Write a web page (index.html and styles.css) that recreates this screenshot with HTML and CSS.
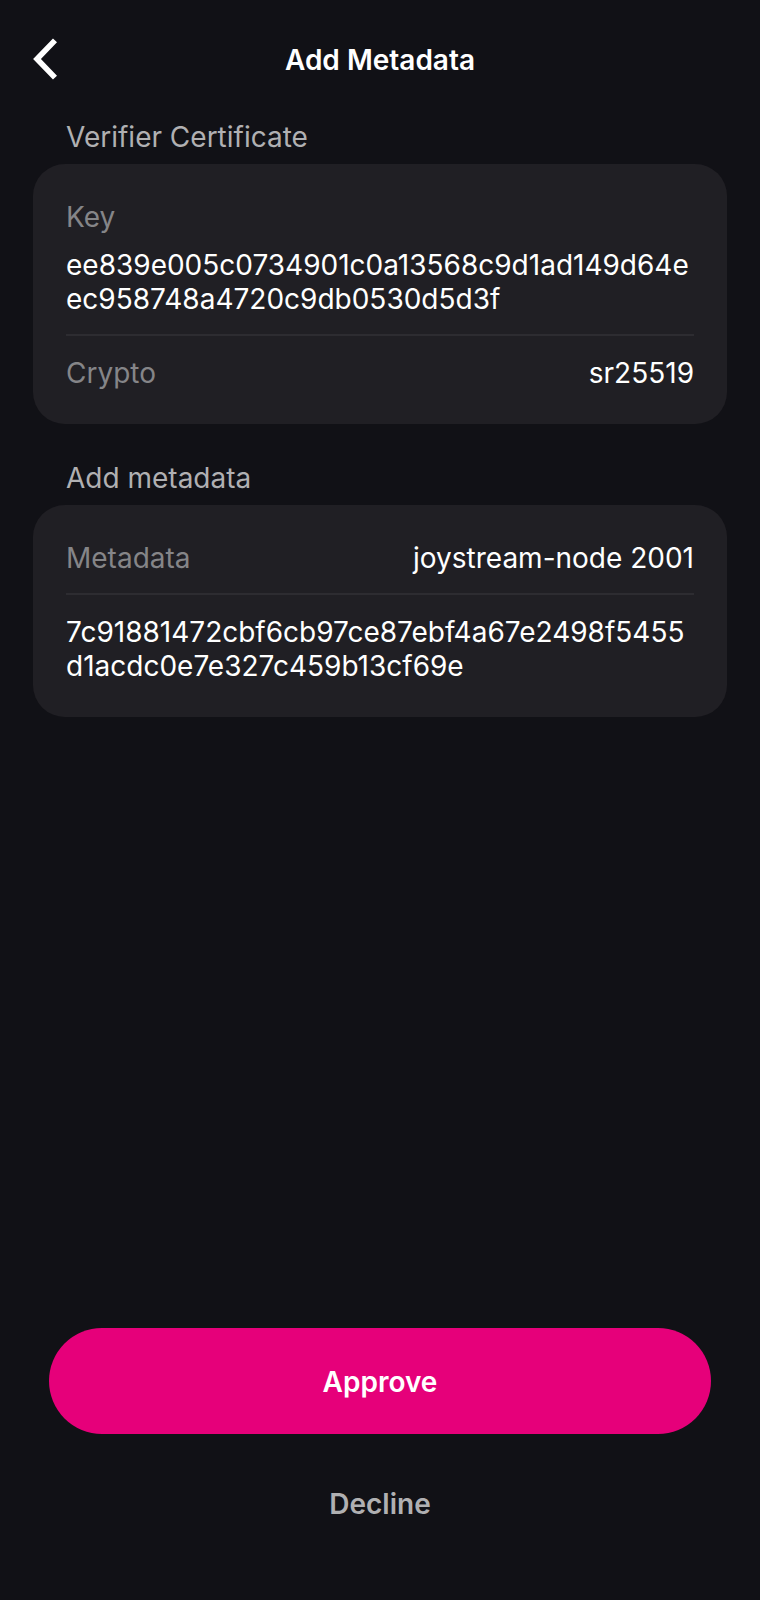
FILE: index.html
```html
<!DOCTYPE html>
<html lang="en">
<head>
<meta charset="utf-8">
<meta name="viewport" content="width=device-width, initial-scale=1">
<title>Add Metadata</title>
<link rel="stylesheet" href="styles.css">
</head>
<body>
<div class="screen">
  <header class="header">
    <button class="back" type="button" aria-label="Back">
      <svg class="back-icon" viewBox="0 0 24 42" fill="none" stroke="currentColor" stroke-width="5.6"><path d="M22 2.4 L4 21 L22 39.6"/></svg>
    </button>
    <h1 class="title">Add Metadata</h1>
  </header>
  <main class="content">
    <section class="section">
      <h2 class="section-title">Verifier Certificate</h2>
      <dl class="card">
        <div class="stack">
          <dt class="label">Key</dt>
          <dd class="value hash">ee839e005c0734901c0a13568c9d1ad149d64eec958748a4720c9db0530d5d3f</dd>
        </div>
        <div class="row divided">
          <dt class="label">Crypto</dt>
          <dd class="value">sr25519</dd>
        </div>
      </dl>
    </section>
    <section class="section">
      <h2 class="section-title">Add metadata</h2>
      <div class="card">
        <div class="row">
          <span class="label">Metadata</span>
          <span class="value">joystream-node 2001</span>
        </div>
        <p class="value hash divided">7c91881472cbf6cb97ce87ebf4a67e2498f5455d1acdc0e7e327c459b13cf69e</p>
      </div>
    </section>
  </main>
  <footer class="actions">
    <button class="button primary" type="button">Approve</button>
    <button class="button secondary" type="button">Decline</button>
  </footer>
</div>
</body>
</html>
```
FILE: styles.css
```css
* {
  box-sizing: border-box;
}

body,
h1,
h2,
p,
dl,
dd {
  margin: 0;
}

body {
  background: #111116;
  color: #fff;
  font-family: Inter, "Liberation Sans", sans-serif;
  font-size: 28px;
  line-height: 34px;
}

button {
  padding: 0;
  border: 0;
  background: none;
  color: inherit;
  font: inherit;
  cursor: pointer;
}

.screen {
  display: flex;
  flex-direction: column;
  min-height: 100vh;
  padding: 32px 33px 44px;
}

.header {
  display: grid;
  grid-template-columns: 48px 1fr 48px;
  align-items: center;
  height: 54px;
}

.back {
  display: flex;
}

.back-icon {
  width: 24px;
  height: 42px;
}

.title {
  padding-top: 2px;
  font-size: 28px;
  font-weight: 600;
  text-align: center;
}

.content {
  display: flex;
  flex-direction: column;
  flex: 1;
  gap: 35px;
  padding-top: 32px;
}

.section-title {
  padding: 2px 33px 10px;
  color: #b0b0b2;
  font-size: 28px;
  font-weight: 400;
}

.card {
  padding: 36px 33px 34px;
  border-radius: 32px;
  background: #201f24;
}

.stack {
  display: grid;
  gap: 14px;
}

.row {
  display: flex;
  justify-content: space-between;
}

.divided {
  margin-top: 18px;
  padding-top: 20px;
  border-top: 2px solid #2d2c31;
}

.label {
  color: #858588;
}

.hash {
  overflow-wrap: anywhere;
}

.actions {
  display: grid;
  gap: 16px;
  padding: 0 16px;
}

.button {
  height: 106px;
  padding-top: 2px;
  border-radius: 53px;
  font-weight: 600;
}

.primary {
  background: #e6007a;
}

.secondary {
  color: #b0b0b2;
}
```
